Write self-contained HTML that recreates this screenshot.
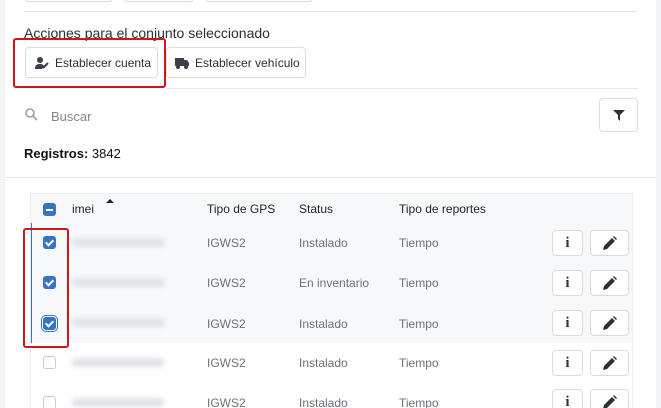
<!DOCTYPE html>
<html><head><meta charset="utf-8"><style>
*{box-sizing:border-box;margin:0;padding:0}
html,body{width:661px;height:408px;overflow:hidden}
body{background:#f3f4f6;font-family:"Liberation Sans",sans-serif;position:relative;color:#212529}
.a{position:absolute}
.card{position:absolute;left:5px;top:0;width:651px;height:408px;background:#fff}
.btn{position:absolute;border:1px solid #d9dbe0;border-radius:4px;background:#fff;font-size:12px;color:#2b2f36}
.hl{position:absolute;height:1px;background:#e3e5e8}
.t{position:absolute;font-size:12px;color:#6c717a}
.cb{position:absolute;left:43px;width:13px;height:13px;border-radius:3px}
.chk{background:#3574c4}
.chk:after{content:"";position:absolute;left:4px;top:2px;width:3px;height:6px;border:solid #fff;border-width:0 2px 2px 0;transform:rotate(45deg)}
.un{border:1px solid #c9ccd1;background:#fff}
.blur{position:absolute;left:72px;width:92px;height:9px;background:#dfe2e7;filter:blur(2.5px);border-radius:4px}
.sb{position:absolute;width:31px;height:26px;border:1px solid #d9dbe0;border-radius:4px;background:#fff;text-align:center;font-family:"Liberation Serif",serif;font-weight:bold;font-size:15px;line-height:24px;color:#333}
.pb{position:absolute;width:39px;height:26px;border:1px solid #d9dbe0;border-radius:4px;background:#fff}
</style></head><body>
<div class="card"></div>
<div class="btn" style="left:25px;top:-10px;width:88px;height:12px"></div>
<div class="btn" style="left:124px;top:-10px;width:70px;height:12px"></div>
<div class="btn" style="left:205px;top:-10px;width:108px;height:12px"></div>
<div class="hl" style="left:24px;top:11px;width:614px"></div>
<div class="a" style="left:24px;top:25px;font-size:14px;color:#2b2f36">Acciones para el conjunto seleccionado</div>
<div class="btn" style="left:25px;top:47px;width:133px;height:31px"><svg class="a" style="left:9px;top:9px" width="14" height="12" viewBox="0 0 14 12"><circle cx="5" cy="3" r="3" fill="#3a3f48"/><path d="M0 12c0-4 2-5 5-5s3 1 4 2l-2 3z" fill="#3a3f48"/><path d="M8 11l5-5" stroke="#3a3f48" stroke-width="2"/></svg><span class="a" style="left:29px;top:8px">Establecer cuenta</span></div>
<div class="btn" style="left:166px;top:47px;width:140px;height:31px"><svg class="a" style="left:8px;top:10px" width="14" height="11" viewBox="0 0 14 11"><rect x="0" y="0" width="9" height="8" fill="#3a3f48"/><path d="M9 2h3l2 3v3H9z" fill="#3a3f48"/><circle cx="3" cy="9" r="2" fill="#3a3f48"/><circle cx="11" cy="9" r="2" fill="#3a3f48"/></svg><span class="a" style="left:28px;top:8px">Establecer vehículo</span></div>
<div class="a" style="left:13px;top:38px;width:153px;height:50px;border:2px solid #d0161b;border-radius:3px"></div>
<div class="hl" style="left:166px;top:88px;width:472px"></div>
<svg class="a" style="left:25px;top:108px" width="13" height="13" viewBox="0 0 13 13"><circle cx="5" cy="5" r="4" fill="none" stroke="#9a9ea6" stroke-width="1.6"/><path d="M8 8l4 4" stroke="#9a9ea6" stroke-width="1.8"/></svg>
<div class="a" style="left:51px;top:109px;font-size:13px;color:#80858d">Buscar</div>
<div class="btn" style="left:599px;top:98px;width:39px;height:34px"><svg class="a" style="left:13px;top:11px" width="12" height="11" viewBox="0 0 12 11"><path d="M0 0h12L7 5v6L5 9V5z" fill="#2b2f36"/></svg></div>
<div class="a" style="left:24px;top:146px;font-size:13px;color:#111"><b>Registros:</b> 3842</div>
<div class="hl" style="left:5px;top:177px;width:651px"></div>
<div class="a" style="left:30px;top:193px;width:603px;height:215px;border:1px solid #eceef1;border-bottom:0"></div>
<div class="a" style="left:31px;top:194px;width:601px;height:29px;background:#f7f8fa"></div>
<div class="a" style="left:31px;top:223px;width:601px;height:120px;background:#f7f8fa"></div>
<div class="a" style="left:31px;top:223px;width:1px;height:120px;background:#3574c4"></div>
<div class="cb" style="top:203px;background:#3574c4"></div><div class="a" style="left:46px;top:209px;width:7px;height:2px;background:#fff"></div>
<div class="a" style="left:72px;top:202px;font-size:12px">imei</div>
<div class="a" style="left:106px;top:199px;width:0;height:0;border:4px solid transparent;border-bottom:4px solid #222;border-top:0"></div>
<div class="a" style="left:207px;top:202px;font-size:12px">Tipo de GPS</div>
<div class="a" style="left:299px;top:202px;font-size:12px">Status</div>
<div class="a" style="left:399px;top:202px;font-size:12px">Tipo de reportes</div>

<div class="cb chk" style="top:236px"></div>
<div class="cb chk" style="top:276px"></div>
<div class="cb chk" style="top:317px;box-shadow:0 0 0 1px #fff,0 0 0 2px #3574c4"></div>
<div class="cb un" style="top:356px"></div>
<div class="cb un" style="top:396px"></div>
<div class="a" style="left:23px;top:228px;width:46px;height:120px;border:2px solid #d0161b;border-radius:3px"></div>

<div class="blur" style="top:238px"></div><div class="blur" style="top:278px"></div><div class="blur" style="top:318px"></div><div class="blur" style="top:358px"></div><div class="blur" style="top:398px"></div>

<div class="t" style="left:207px;top:236px">IGWS2</div><div class="t" style="left:299px;top:236px">Instalado</div><div class="t" style="left:399px;top:236px">Tiempo</div>
<div class="t" style="left:207px;top:276px">IGWS2</div><div class="t" style="left:299px;top:276px">En inventario</div><div class="t" style="left:399px;top:276px">Tiempo</div>
<div class="t" style="left:207px;top:317px">IGWS2</div><div class="t" style="left:299px;top:317px">Instalado</div><div class="t" style="left:399px;top:317px">Tiempo</div>
<div class="t" style="left:207px;top:356px">IGWS2</div><div class="t" style="left:299px;top:356px">Instalado</div><div class="t" style="left:399px;top:356px">Tiempo</div>
<div class="t" style="left:207px;top:396px">IGWS2</div><div class="t" style="left:299px;top:396px">Instalado</div><div class="t" style="left:399px;top:396px">Tiempo</div>

<div class="sb" style="left:552px;top:230px">i</div><div class="pb" style="left:590px;top:230px"><svg class="a" style="left:12px;top:5px" width="14" height="14" viewBox="0 0 14 14"><path d="M0 14l1-4 8-8 3 3-8 8z" fill="#2b2f36"/><path d="M10 1l1-1 3 3-1 1z" fill="#2b2f36"/></svg></div>
<div class="sb" style="left:552px;top:270px">i</div><div class="pb" style="left:590px;top:270px"><svg class="a" style="left:12px;top:5px" width="14" height="14" viewBox="0 0 14 14"><path d="M0 14l1-4 8-8 3 3-8 8z" fill="#2b2f36"/><path d="M10 1l1-1 3 3-1 1z" fill="#2b2f36"/></svg></div>
<div class="sb" style="left:552px;top:310px">i</div><div class="pb" style="left:590px;top:310px"><svg class="a" style="left:12px;top:5px" width="14" height="14" viewBox="0 0 14 14"><path d="M0 14l1-4 8-8 3 3-8 8z" fill="#2b2f36"/><path d="M10 1l1-1 3 3-1 1z" fill="#2b2f36"/></svg></div>
<div class="sb" style="left:552px;top:350px">i</div><div class="pb" style="left:590px;top:350px"><svg class="a" style="left:12px;top:5px" width="14" height="14" viewBox="0 0 14 14"><path d="M0 14l1-4 8-8 3 3-8 8z" fill="#2b2f36"/><path d="M10 1l1-1 3 3-1 1z" fill="#2b2f36"/></svg></div>
<div class="sb" style="left:552px;top:389px">i</div><div class="pb" style="left:590px;top:389px"><svg class="a" style="left:12px;top:5px" width="14" height="14" viewBox="0 0 14 14"><path d="M0 14l1-4 8-8 3 3-8 8z" fill="#2b2f36"/><path d="M10 1l1-1 3 3-1 1z" fill="#2b2f36"/></svg></div>
</body></html>
